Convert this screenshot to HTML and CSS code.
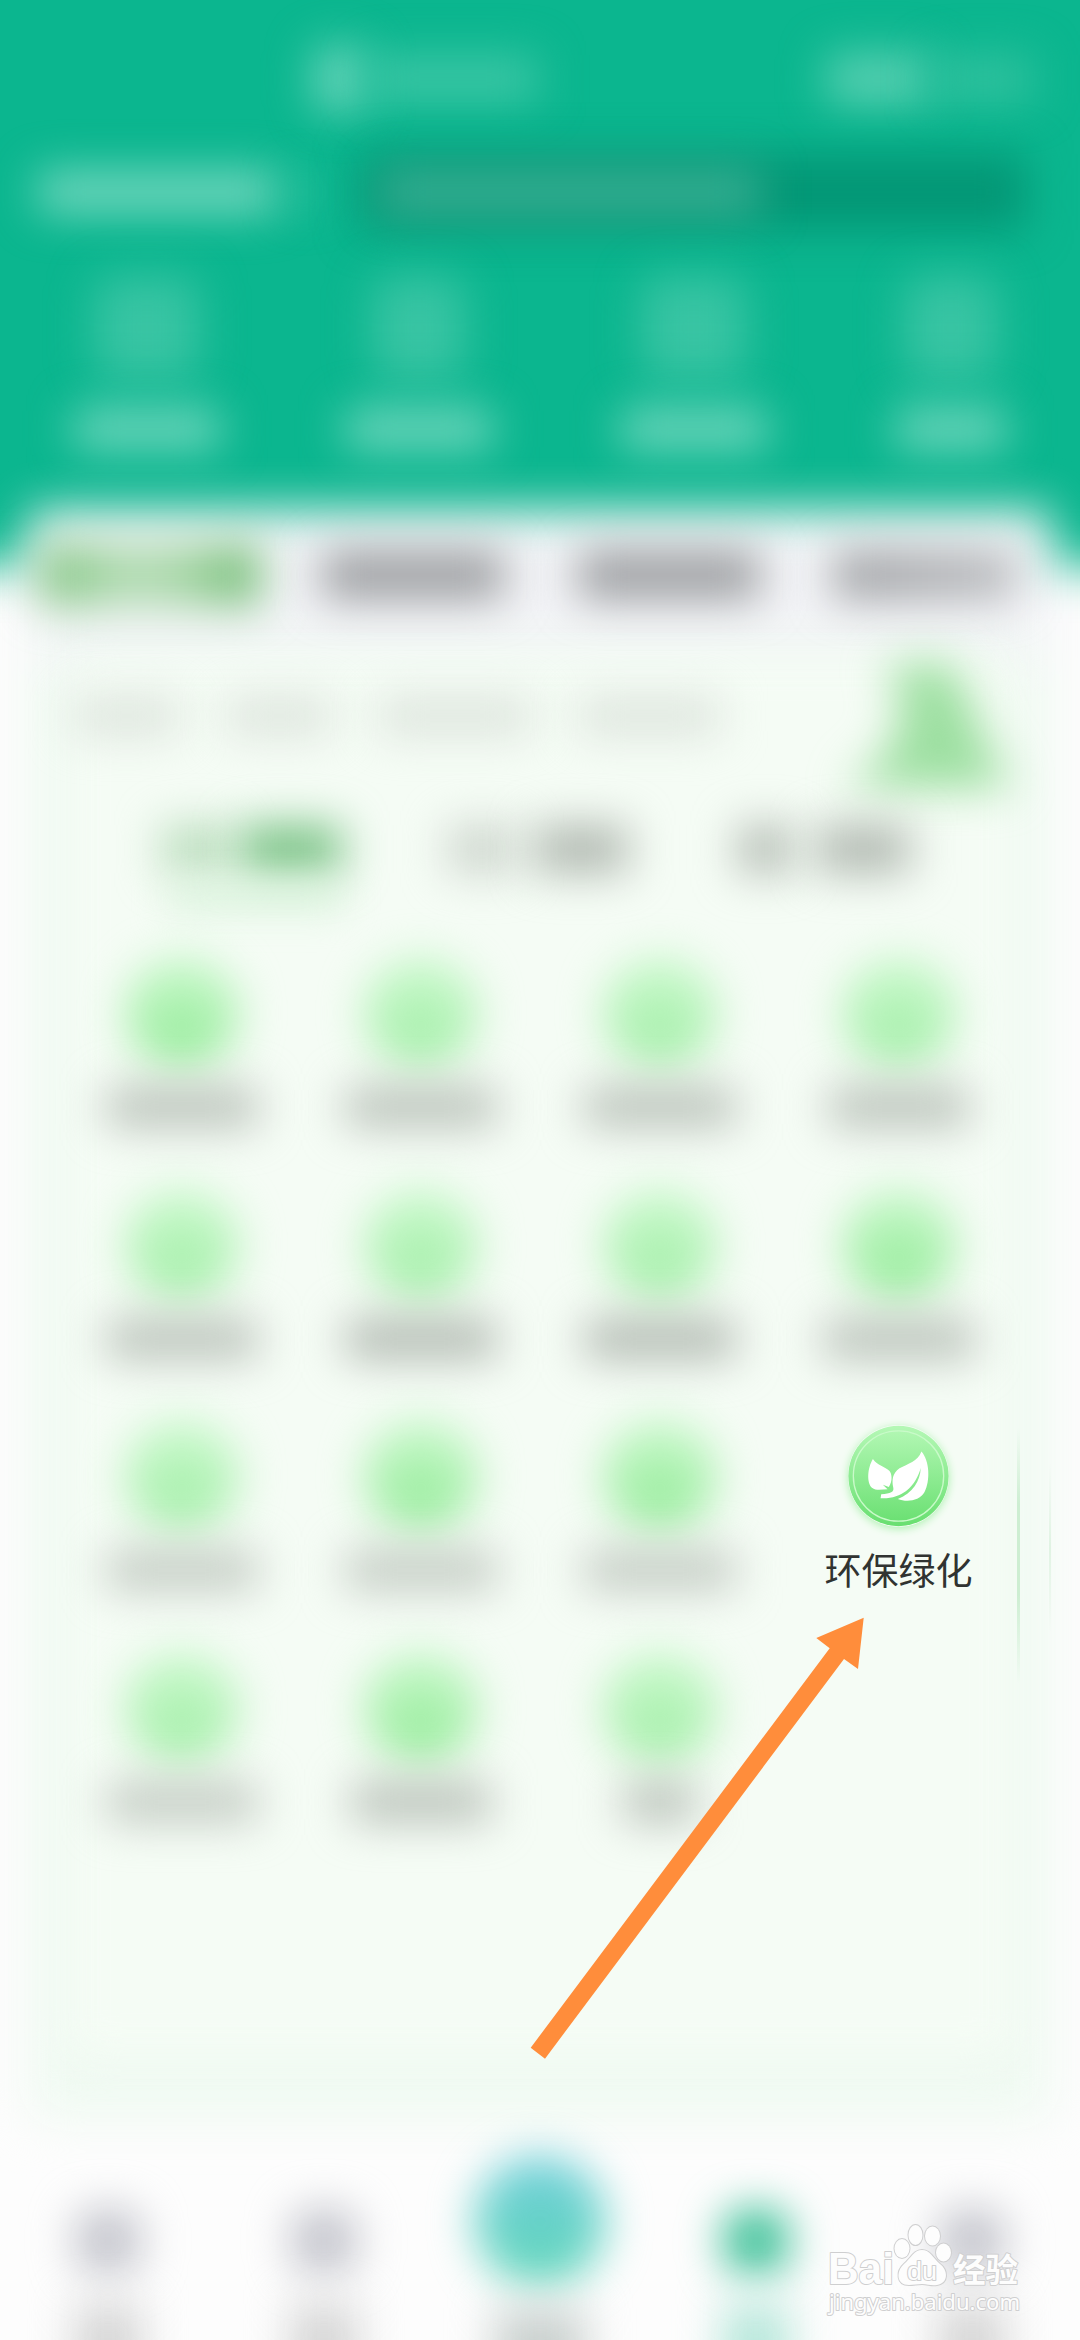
FILE: index.html
```html
<!DOCTYPE html>
<html lang="zh-CN">
<head>
<meta charset="utf-8">
<title>环保绿化</title>
<link rel="stylesheet" href="styles.css">
</head>
<body>
<div class="screen">
  <header class="header">
    <div class="header-title">
      <i class="soft title-logo"></i><i class="soft title-text"></i>
      <i class="soft pill-a"></i><i class="soft pill-b"></i>
    </div>
    <div class="header-search">
      <i class="soft place"></i><i class="soft caret"></i>
      <div class="search"><i class="soft search-text"></i></div>
    </div>
    <div class="quick">
      <div class="quick-item"><i class="soft quick-icon"></i><i class="soft quick-label"></i></div>
      <div class="quick-item"><i class="soft quick-icon slim"></i><i class="soft quick-label"></i></div>
      <div class="quick-item"><i class="soft quick-icon"></i><i class="soft quick-label"></i></div>
      <div class="quick-item"><i class="soft quick-icon slim"></i><i class="soft quick-label short"></i></div>
    </div>
  </header>

  <main class="card">
    <nav class="tabs">
      <i class="soft tab active"></i><i class="soft tab"></i><i class="soft tab"></i><i class="soft tab last"></i>
    </nav>
    <section class="intro">
      <div class="intro-text"><i class="soft t1"></i><i class="soft t2"></i><i class="soft t3"></i><i class="soft t4"></i></div>
      <svg class="soft deco" viewBox="0 0 160 140"><path fill="#9cdfa0" d="M34 12L100 8L120 40L136 84L164 134H-4L26 112L48 84L54 40Z"/></svg>
    </section>
    <nav class="subtabs">
      <div class="subtab on"><i class="soft s1"></i><i class="soft s2"></i></div>
      <div class="subtab"><i class="soft s1"></i><i class="soft s2"></i></div>
      <div class="subtab third"><i class="soft s1"></i><i class="soft s2"></i></div>
    </nav>
    <section class="grid">
      <div class="cell"><i class="soft dot deep"></i><i class="soft label"></i></div>
      <div class="cell"><i class="soft dot"></i><i class="soft label"></i></div>
      <div class="cell"><i class="soft dot"></i><i class="soft label"></i></div>
      <div class="cell"><i class="soft dot"></i><i class="soft label narrow"></i></div>
      <div class="cell"><i class="soft dot"></i><i class="soft label"></i></div>
      <div class="cell"><i class="soft dot"></i><i class="soft label dark"></i></div>
      <div class="cell"><i class="soft dot"></i><i class="soft label dark"></i></div>
      <div class="cell"><i class="soft dot deep"></i><i class="soft label"></i></div>
      <div class="cell"><i class="soft dot"></i><i class="soft label pale"></i></div>
      <div class="cell"><i class="soft dot deep"></i><i class="soft label pale"></i></div>
      <div class="cell"><i class="soft dot deep"></i><i class="soft label pale"></i></div>
      <div class="cell focus">
        <svg class="leaf" viewBox="200 133 304 306">
          <defs><linearGradient id="g" x1="0" y1="0" x2="0" y2="1"><stop offset="0" stop-color="#b5f8b6"/><stop offset="1" stop-color="#68df70"/></linearGradient></defs>
          <circle cx="352" cy="286" r="151" fill="url(#g)"/>
          <circle cx="352" cy="286" r="136" fill="none" stroke="#c9fac9" stroke-width="4"/>
          <g fill="#fff">
            <path d="M275 235C258 262 256 308 272 321C286 332 302 326 319 326L305 312L323 319C335 300 332 280 325 271C312 258 288 254 275 235Z"/>
            <path d="M421 212C410 243 380 248 355 263C333 278 332 300 336 320C340 335 328 339 300 341L298 353C330 355 355 345 375 331C400 312 412 285 419 262C417 302 395 337 350 355C375 365 415 362 430 335C448 300 446 240 421 212Z"/>
          </g>
        </svg>
        <span class="name">环保绿化</span>
      </div>
      <div class="cell"><i class="soft dot"></i><i class="soft label pale"></i></div>
      <div class="cell"><i class="soft dot deep"></i><i class="soft label narrow"></i></div>
      <div class="cell"><i class="soft dot"></i><i class="soft label tiny"></i></div>
    </section>
    <i class="edge edge-a"></i><i class="edge edge-b"></i>
  </main>

  <footer class="nav">
    <div class="nav-item"><i class="soft nav-icon"></i><i class="soft nav-label"></i></div>
    <div class="nav-item"><i class="soft nav-icon"></i><i class="soft nav-label"></i></div>
    <div class="nav-item main"><i class="soft nav-icon"></i><i class="soft nav-label"></i></div>
    <div class="nav-item on"><i class="soft nav-icon"></i><i class="soft nav-label"></i></div>
    <div class="nav-item"><i class="soft nav-icon"></i><i class="soft nav-label"></i></div>
  </footer>

  <svg class="arrow" viewBox="530 1617 334 442"><path fill="#ff8d3b" d="M863.7 1617.7L816.3 1638L829.7 1648.3L530.7 2047.7L545 2058.7L844 1659L858 1669Z"/></svg>

  <svg class="watermark" viewBox="820 2218 208 102">
    <g class="mark">
      <text class="latin" x="828" y="2284" font-size="44" textLength="66" lengthAdjust="spacingAndGlyphs">Bai</text>
      <ellipse cx="902" cy="2248.500" rx="7.500" ry="9.500"/><ellipse cx="915.500" cy="2235" rx="7" ry="10"/><ellipse cx="932.500" cy="2236" rx="7.500" ry="9.500"/><ellipse cx="943.500" cy="2252.500" rx="7.500" ry="9"/>
      <path d="M922 2250C914 2250 911 2258 904 2264C896 2271 896 2285 909 2285C914 2285 917 2284 922 2284C928 2284 931 2286 937 2285C949 2283 948 2270 940 2264C933 2258 930 2250 922 2250Z"/>
      <text class="latin du" x="907" y="2280" font-size="25" textLength="30" lengthAdjust="spacingAndGlyphs">du</text>
      <text class="han" x="953" y="2282" font-size="33" textLength="65" lengthAdjust="spacingAndGlyphs">经验</text>
      <text class="url" x="829" y="2310" font-size="22" textLength="191" lengthAdjust="spacingAndGlyphs">jingyan.baidu.com</text>
    </g>
  </svg>
</div>
</body>
</html>
```
FILE: styles.css
```css
* { box-sizing: border-box; }
body { margin: 0; font-family: "Noto Sans CJK SC", "Noto Sans", sans-serif; }
i { display: block; flex: none; }

.screen {
  position: relative;
  display: flex;
  flex-direction: column;
  width: 1080px;
  height: 2340px;
  overflow: hidden;
  background: #fdfdfd;
}
.soft { filter: blur(22px); }

/* Header */
.header { position: relative; height: 508px; padding-top: 44px; isolation: isolate; }
.header::before {
  content: "";
  position: absolute;
  inset: -90px -90px -58px;
  z-index: -1;
  background: #0bb68f;
  filter: blur(24px);
}
.header-title { display: flex; align-items: center; height: 70px; padding-left: 312px; }
.title-logo { width: 56px; height: 68px; border-radius: 16px; background: #63d3b8; }
.title-text { width: 170px; height: 48px; background: #3bc6a5; }
.pill-a { width: 106px; height: 52px; margin-left: 288px; border-radius: 8px; background: #57cfb1; }
.pill-b { width: 102px; height: 48px; background: #2fc19e; }

.header-search { display: flex; align-items: center; height: 100px; margin-top: 28px; padding-left: 38px; }
.place { width: 240px; height: 42px; background: #74d7bf; }
.caret { width: 30px; height: 28px; margin-left: 10px; background: #2fc19e; }
.search { position: relative; display: flex; align-items: center; width: 666px; height: 76px; margin-left: 42px; padding-left: 20px; isolation: isolate; }
.search::before { content: ""; position: absolute; inset: 0; z-index: -1; background: #039675; filter: blur(22px); }
.search-text { width: 380px; height: 48px; background: #36ad91; }

.quick { display: grid; grid-template-columns: 294px 250px 300px 214px; margin-top: 34px; }
.quick-item { display: flex; flex-direction: column; align-items: center; gap: 29px; }
.quick-icon { width: 106px; height: 104px; border-radius: 18px; background: #38c4a3; }
.quick-icon.slim { width: 94px; }
.quick-label { width: 146px; height: 40px; background: #72d7be; }
.quick-label.short { width: 110px; }

/* Service card */
.card { position: relative; width: 1024px; height: 1614px; margin: 0 28px; isolation: isolate; }
.card::before {
  content: "";
  position: absolute;
  inset: 2px 0 0;
  z-index: -2;
  border-radius: 12px;
  background: linear-gradient(#f3f4f7 0 110px, #f0faf2 180px);
  filter: blur(24px);
}
.card::after {
  content: "";
  position: absolute;
  inset: 150px 40px 66px;
  z-index: -1;
  border-radius: 20px;
  background: #f5fcf5;
  filter: blur(20px);
}
.tabs { display: flex; align-items: center; height: 134px; padding-left: 12px; }
.tab { width: 182px; height: 48px; margin-right: 74px; background: #9a9c9f; }
.tab.active {
  width: 220px;
  height: 62px;
  margin-right: 62px;
  background: linear-gradient(90deg, #7cc27c, #b2dcb3 40%, #a6d6a6 65%, #6ab96d);
}
.tab.last { background: linear-gradient(90deg, #9c9ea1, #b8babd); margin-right: 0; }

.intro { display: flex; align-items: center; height: 156px; padding-left: 46px; }
.intro-text { display: flex; gap: 46px; width: 762px; margin-top: -8px; }
.intro-text i { height: 36px; background: #dbe3db; }
.t1, .t2 { width: 106px; }
.t3 { width: 154px; }
.t4 { width: 142px; }
.deco { width: 160px; height: 140px; margin: 0 0 -8px 12px; overflow: visible; }

.subtabs { display: flex; gap: 100px; height: 162px; padding: 27px 0 0 134px; }
.subtab { display: flex; align-items: center; width: 182px; height: 48px; margin-right: 4px; }
.subtab i { height: 48px; }
.s1 { width: 68px; background: #cdd5cd; }
.s2 { width: 94px; margin-left: 18px; background: #b0b8b0; }
.third .s1 { width: 54px; margin-left: 4px; background: #b3bbb3; }
.third .s2 { margin-left: 24px; }
.subtab.on { position: relative; }
.subtab.on::after { content: ""; position: absolute; left: 6px; top: 62px; width: 176px; height: 22px; background: #d6f3d9; filter: blur(18px); }
.on .s1 { background: #b8dcbb; }
.on .s2 { background: #76c182; margin-left: 10px; width: 102px; }

.grid { display: grid; grid-template-columns: repeat(4, 239px); grid-auto-rows: 231.5px; padding: 0 0 0 34px; }
.cell { display: flex; flex-direction: column; align-items: center; gap: 20px; }
.dot { width: 112px; height: 110px; margin-top: -2px; border-radius: 50%; background: linear-gradient(#c6f9c9, #a1eda6); }
.dot.deep { background: linear-gradient(#c3f8c6, #92ea97); }
.label { width: 150px; height: 38px; background: #b6beb6; }
.label.dark { background: #adb5ad; }
.label.pale { background: #c0c8c0; }
.label.narrow { width: 138px; }
.label.tiny { width: 72px; }
.leaf { width: 101px; height: 102px; margin: 2px 0 0; border-radius: 50%; box-shadow: 0 2px 8px #aff1b2; }
.name { font-size: 37px; line-height: 44px; color: #303331; white-space: nowrap; }

.edge { position: absolute; }
.edge-a { left: 989px; top: 920px; width: 3px; height: 256px; background: linear-gradient(transparent, #cdeed2 30% 65%, transparent); }
.edge-b { left: 1021px; top: 955px; width: 2px; height: 170px; background: linear-gradient(transparent, #e0f3e3 50%, transparent); }

/* Bottom navigation */
.nav { display: grid; grid-template-columns: repeat(5, 216px); height: 218px; }
.nav-item { display: flex; flex-direction: column; align-items: center; padding-top: 87px; gap: 31px; }
.nav-icon { width: 64px; height: 64px; border-radius: 20px; background: #c1c2ca; }
.nav-label { width: 66px; height: 80px; background: #d4d4d4; }
.nav-item.on .nav-icon { background: #36be94; }
.nav-item.on .nav-label { background: #b4e6d9; }
.nav-item.main { padding-top: 34px; gap: 22px; }
.main .nav-icon { width: 130px; height: 130px; border-radius: 50%; background: linear-gradient(#6fceda, #60d6b8); }
.main .nav-label { width: 90px; background: #c9d0ce; }

.arrow { position: absolute; left: 530px; top: 1617px; width: 334px; height: 442px; }
.watermark { position: absolute; left: 820px; top: 2218px; width: 208px; height: 102px; }
.mark { fill: #fdfdfd; stroke: #cfcfd0; stroke-width: 2px; paint-order: stroke; stroke-linejoin: round; }
.latin { font-family: "Liberation Sans", sans-serif; font-weight: 700; }
.du { font-weight: 400; }
.han { font-family: "Noto Sans CJK SC", sans-serif; font-weight: 700; }
.url { font-family: "Noto Sans", sans-serif; }
```
